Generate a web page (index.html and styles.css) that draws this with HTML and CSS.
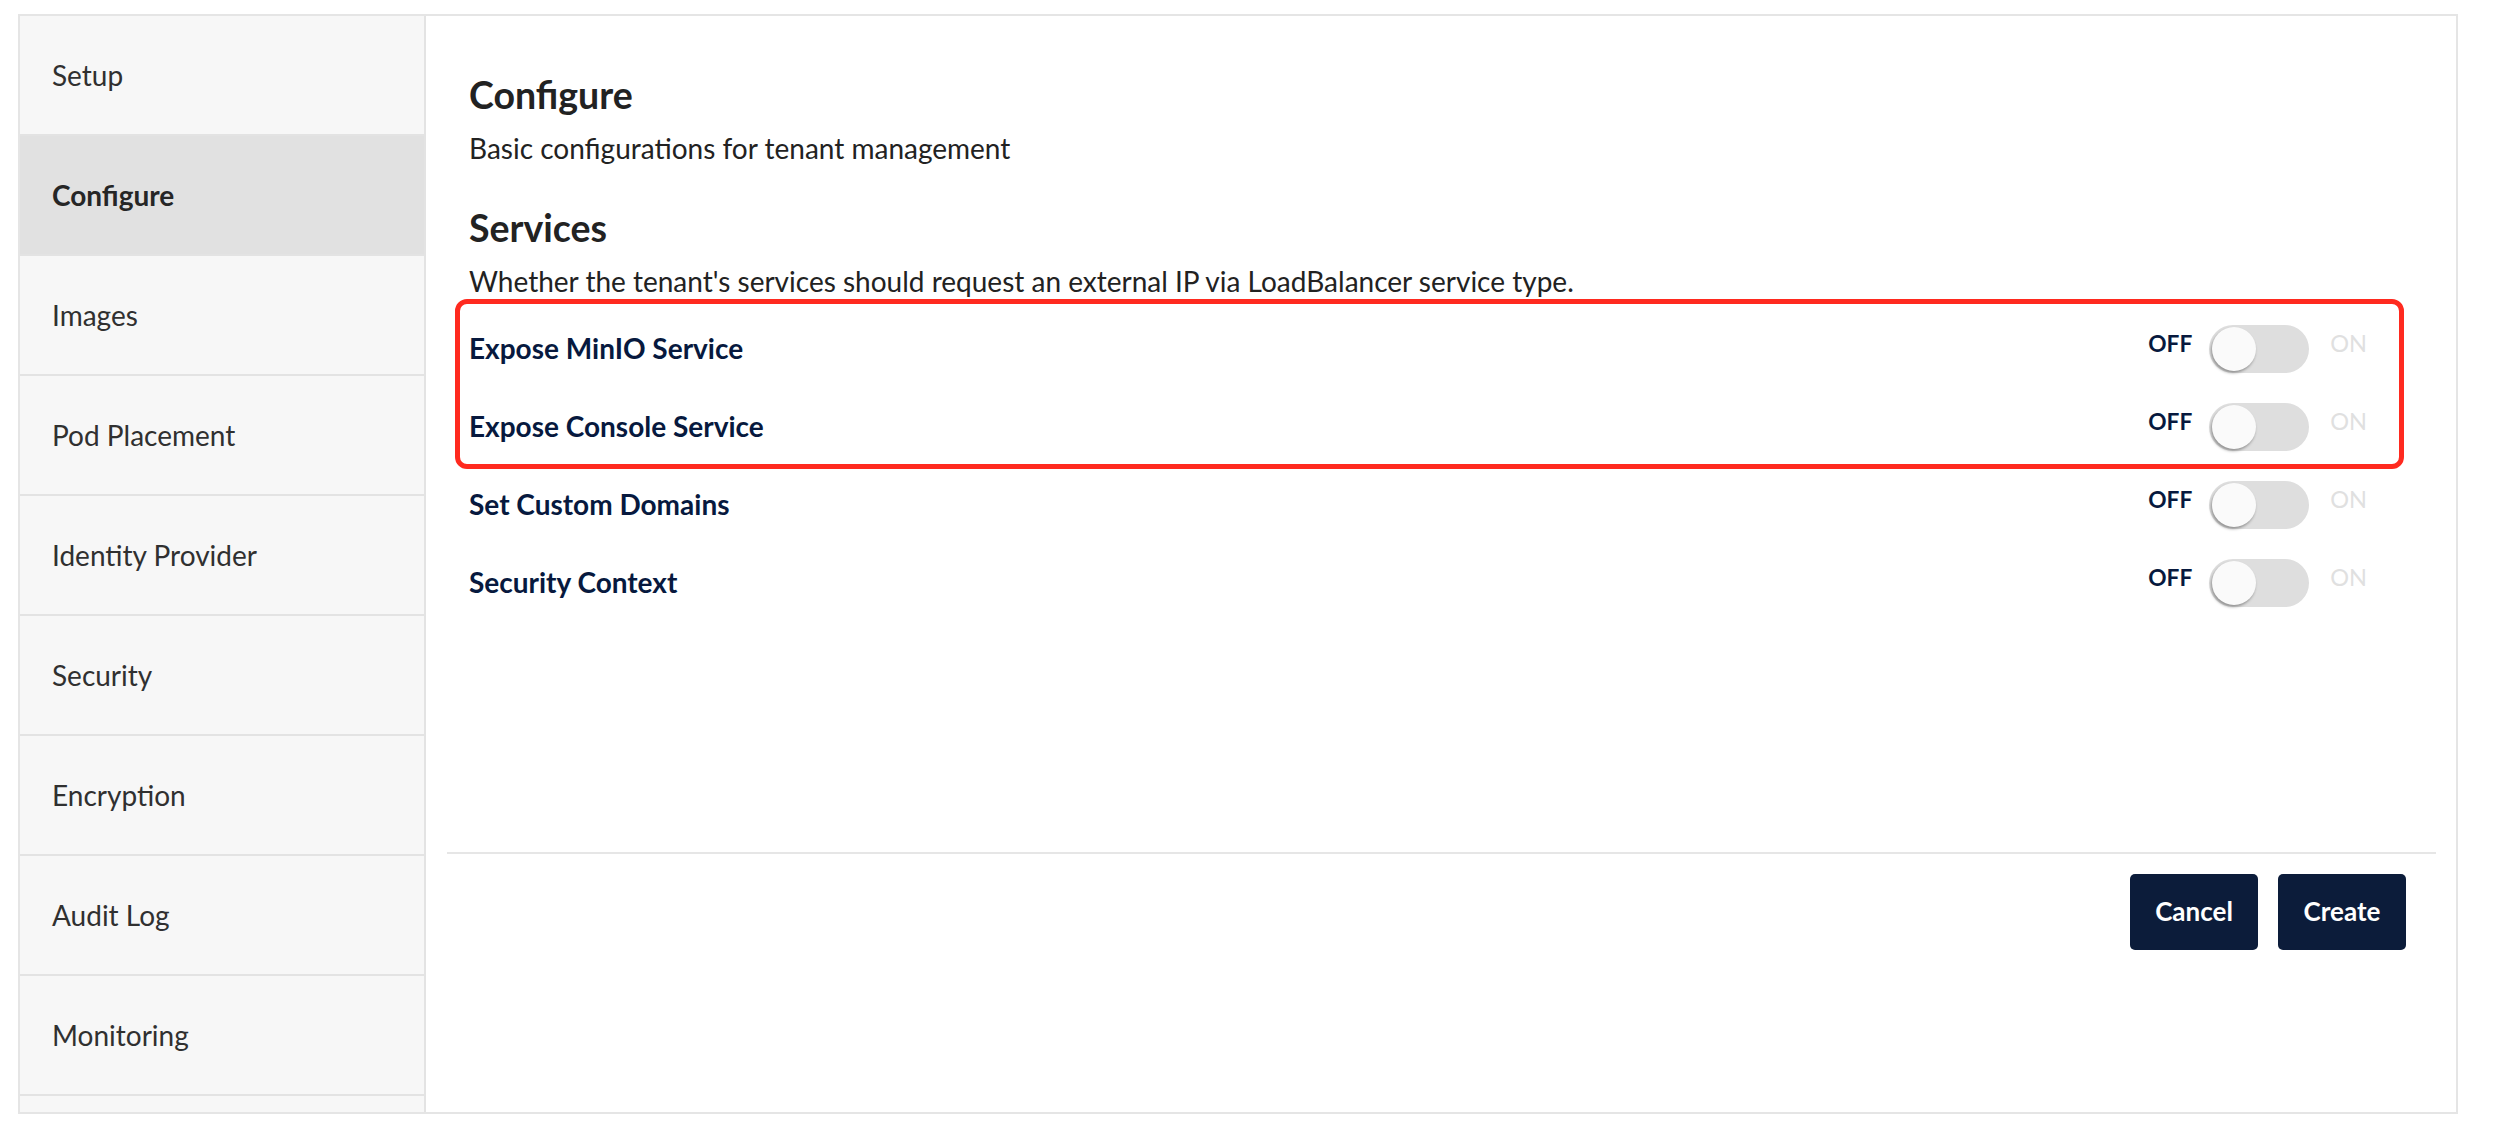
FILE: index.html
```html
<!DOCTYPE html>
<html lang="en">
<head>
<meta charset="utf-8">
<title>Create Tenant - Configure</title>
<link rel="stylesheet" href="styles.css">
</head>
<body>
<div class="wizard">
  <nav class="steps">
    <div class="step">Setup</div>
    <div class="step step-active">Configure</div>
    <div class="step">Images</div>
    <div class="step">Pod Placement</div>
    <div class="step">Identity Provider</div>
    <div class="step">Security</div>
    <div class="step">Encryption</div>
    <div class="step">Audit Log</div>
    <div class="step">Monitoring</div>
  </nav>
  <main class="panel">
    <section class="form">
      <h2 class="title">Configure</h2>
      <p class="desc desc-first">Basic configurations for tenant management</p>
      <h3 class="title title-sub">Services</h3>
      <p class="desc">Whether the tenant's services should request an external IP via LoadBalancer service type.</p>
      <div class="rows">
        <div class="row">
          <span class="row-label">Expose MinIO Service</span>
          <div class="switch"><span class="sw-off">OFF</span><span class="track"><span class="knob"></span></span><span class="sw-on">ON</span></div>
        </div>
        <div class="row">
          <span class="row-label">Expose Console Service</span>
          <div class="switch"><span class="sw-off">OFF</span><span class="track"><span class="knob"></span></span><span class="sw-on">ON</span></div>
        </div>
        <div class="row">
          <span class="row-label">Set Custom Domains</span>
          <div class="switch"><span class="sw-off">OFF</span><span class="track"><span class="knob"></span></span><span class="sw-on">ON</span></div>
        </div>
        <div class="row">
          <span class="row-label">Security Context</span>
          <div class="switch"><span class="sw-off">OFF</span><span class="track"><span class="knob"></span></span><span class="sw-on">ON</span></div>
        </div>
        <div class="highlight"></div>
      </div>
    </section>
    <footer class="actions">
      <button class="btn">Cancel</button>
      <button class="btn">Create</button>
    </footer>
  </main>
</div>
</body>
</html>
```
FILE: styles.css
```css
* { box-sizing: border-box; }

html, body {
  margin: 0;
  padding: 0;
  background: #ffffff;
}

body {
  font-family: Lato, "Open Sans", sans-serif;
  padding: 14px 36px 14px 18px;
}

.wizard {
  display: flex;
  height: 1100px;
  border: 2px solid #e5e5e5;
  overflow: hidden;
}

/* ---------- sidebar ---------- */
.steps {
  width: 406px;
  flex: none;
  background: #f7f7f7;
  border-right: 2px solid #e3e3e3;
  display: flex;
  flex-direction: column;
}

.step {
  height: 120px;
  flex: none;
  display: flex;
  align-items: center;
  padding: 2px 0 0 32px;
  font-size: 28px;
  line-height: 1.2;
  color: #303030;
  border-bottom: 2px solid #e3e3e3;
}

.step-active {
  background: #e1e1e1;
  font-weight: 700;
  color: #262626;
}

/* ---------- main panel ---------- */
.panel {
  flex: 1;
  display: flex;
  flex-direction: column;
  padding-bottom: 162px;
}

.form {
  padding: 56px 89px 0 43px;
}

.title {
  margin: 0;
  font-size: 37.5px;
  line-height: 1.2;
  font-weight: 700;
  color: #222222;
}

.title-sub {
  margin-top: 39px;
}

.desc {
  margin: 15px 0 0;
  font-size: 28px;
  line-height: 1.2;
  color: #222222;
}

.desc-first {
  margin-top: 15px;
}

.rows {
  position: relative;
  margin-top: 12px;
}

.row {
  height: 78px;
  display: flex;
  align-items: center;
  justify-content: space-between;
}

.row-label {
  font-size: 28px;
  line-height: 1.2;
  font-weight: 700;
  color: #07193e;
}

.switch {
  display: flex;
  align-items: center;
}

.sw-off,
.sw-on {
  line-height: 1.2;
  margin-bottom: 12px;
}

.sw-off {
  font-size: 22.7px;
  font-weight: 700;
  color: #07193e;
  margin-right: 17px;
}

.sw-on {
  font-size: 23.5px;
  color: #e0e0e0;
  margin-left: 21px;
}

.track {
  width: 100px;
  height: 48px;
  border-radius: 24px;
  background: #dedede;
  display: flex;
  align-items: center;
  padding: 0 3px;
}

.knob {
  width: 44px;
  height: 44px;
  border-radius: 50%;
  background: #fafafa;
  box-shadow: -1px 2px 3px rgba(0, 0, 0, 0.35);
}

/* annotation frame drawn over the first two rows */
.highlight {
  position: absolute;
  top: -11px;
  left: -14px;
  right: -37px;
  height: 170px;
  border: 5px solid #ff2a1f;
  border-radius: 12px;
  pointer-events: none;
}

/* ---------- footer ---------- */
.actions {
  margin: auto 20px 0 21px;
  border-top: 2px solid #e6e6e6;
  padding: 20px 30px 0 0;
  display: flex;
  justify-content: flex-end;
  gap: 20px;
}

.btn {
  font-family: Lato, "Open Sans", sans-serif;
  font-size: 26px;
  font-weight: 700;
  line-height: 32px;
  color: #ffffff;
  background: #0c1c3a;
  border: none;
  border-radius: 5px;
  padding: 21px 25px 23px;
  width: 128px;
  text-align: center;
}
```
